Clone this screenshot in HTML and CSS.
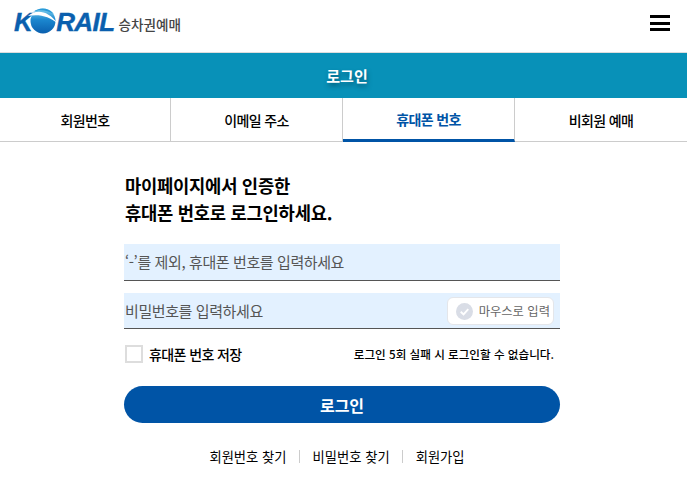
FILE: index.html
```html
<!doctype html>
<html lang="ko">
	<head>
		<meta charset="UTF-8" />
		<title>로그인</title>
		<link rel="stylesheet" href="styles.css">
	</head>
	<body>
		<header class="topbar">
			<a class="logo">
				<span class="logo-word">K<svg class="logo-globe" width="30" height="27" viewBox="0 0 30 27">
					<defs>
						<linearGradient id="globe" x1="0" y1="0" x2="0" y2="1">
							<stop offset="0" stop-color="#7fd0ee" />
							<stop offset="0.45" stop-color="#1b87cf" />
							<stop offset="1" stop-color="#0a5fae" />
						</linearGradient>
					</defs>
					<circle cx="15" cy="14" r="12.5" fill="url(#globe)" />
					<path d="M0 9C8 2 20 3 30 17C21 9 11 7 0 9Z" fill="#fff" />
					<path d="M5 5C11 0 20 0 26 7C19 3 11 2 5 5Z" fill="#2a9ad8" />
				</svg>RAIL</span>
				<span class="logo-sub">승차권예매</span>
			</a>
			<button class="menu" aria-label="메뉴"><i></i><i></i><i></i></button>
		</header>

		<h1 class="title-band"><span>로그인</span></h1>

		<nav class="tabs">
			<a class="tab">회원번호</a>
			<a class="tab">이메일 주소</a>
			<a class="tab active">휴대폰 번호</a>
			<a class="tab">비회원 예매</a>
		</nav>

		<main class="login">
			<p class="lead">마이페이지에서 인증한<br />휴대폰 번호로 로그인하세요.</p>

			<div class="field mb-12">
				<input class="input" type="text" placeholder="‘-’를 제외, 휴대폰 번호를 입력하세요" />
			</div>
			<div class="field field-short">
				<input class="input" type="text" placeholder="비밀번호를 입력하세요" />
				<span class="mouse-btn">
					<svg width="17" height="17" viewBox="0 0 18 18">
						<circle cx="9" cy="9" r="9" fill="#d9dde6" />
						<path d="M5 9.2L8 12L13 6.5" fill="none" stroke="#fff" stroke-width="2" />
					</svg>
					마우스로 입력
				</span>
			</div>

			<div class="options">
				<label class="save"><span class="check"></span>휴대폰 번호 저장</label>
				<span class="notice">로그인 5회 실패 시 로그인할 수 없습니다.</span>
			</div>

			<button class="submit">로그인</button>

			<div class="links">
				<a>회원번호 찾기</a>
				<a>비밀번호 찾기</a>
				<a>회원가입</a>
			</div>
		</main>
	</body>
</html>
```

FILE: styles.css
```css
:root {
	--color-blue: #0054a6;
	--color-teal: #0891b8;
	--color-field: #e3f1ff;
	--color-line: #cccccc;
}

* {
	box-sizing: border-box;
}

body {
	margin: 0;
	background-color: #fff;
	color: #000;
	font-family: 'Noto Sans CJK KR', 'Noto Sans', sans-serif;
	overflow: hidden;
}

a {
	color: inherit;
	text-decoration: none;
}

.topbar {
	display: flex;
	align-items: flex-start;
	justify-content: space-between;
	height: 52px;
	padding: 9px 17px 0 14px;
}

.logo {
	display: flex;
	align-items: center;
	gap: 4px;
}

.logo-word {
	display: flex;
	align-items: center;
	color: #0a5fae;
	font-family: 'Liberation Sans', sans-serif;
	font-size: 26px;
	font-weight: 700;
	font-style: italic;
	line-height: 27px;
	letter-spacing: -0.6px;
	-webkit-text-stroke: 0.4px #0a5fae;
}

.logo-globe {
	margin: -4px -2px 0 -4px;
}

.logo-sub {
	color: #444;
	font-size: 13.6px;
	font-weight: 500;
	line-height: 18px;
	margin-top: 3px;
}

.menu {
	display: flex;
	flex-direction: column;
	gap: 3.5px;
	width: 20px;
	margin-top: 6px;
	padding: 0;
	border: none;
	background: none;
}

.menu i {
	display: block;
	height: 3px;
	background-color: #000;
}

.title-band {
	display: flex;
	align-items: center;
	justify-content: center;
	height: 46px;
	margin: 0;
	padding-left: 7px;
	border-top: 1px solid #ddd;
	background-color: var(--color-teal);
	color: #fff;
	font-size: 15px;
	font-weight: 700;
	text-shadow: 1px 3px 4px rgba(0, 40, 60, 0.5);
}

.tabs {
	display: grid;
	grid-template-columns: 171px 172px 172px 172px;
	height: 44px;
	border-bottom: 1px solid var(--color-line);
}

.tab {
	display: flex;
	align-items: center;
	justify-content: center;
	border-right: 1px solid var(--color-line);
	font-size: 14px;
	font-weight: 500;
	letter-spacing: -0.6px;
}

.tab:last-child {
	border-right: none;
}

.tab.active {
	margin-bottom: -1px;
	border-bottom: 3px solid var(--color-blue);
	color: var(--color-blue);
	font-weight: 700;
}

.login {
	width: 436px;
	margin-left: 124px;
	padding-top: 30px;
}

.lead {
	margin: 0 0 18px 1px;
	font-size: 17.7px;
	font-weight: 700;
	line-height: 27px;
	letter-spacing: -0.25px;
}

.field {
	position: relative;
	height: 37px;
	background-color: var(--color-field);
	border-bottom: 1px solid #555;
}

.field-short {
	height: 36px;
}

.mb-12 {
	margin-bottom: 12px;
}

.input {
	width: 100%;
	height: 35px;
	padding: 0 1px;
	border: none;
	outline: none;
	background: none;
	font-family: inherit;
	font-size: 15px;
	letter-spacing: -0.4px;
}

.input::placeholder {
	color: #555;
	opacity: 1;
}

.mouse-btn {
	position: absolute;
	top: 4px;
	right: 6px;
	display: flex;
	align-items: center;
	gap: 6px;
	height: 28px;
	padding: 0 3px 0 8px;
	border: 1px solid #e4e6ea;
	border-radius: 6px;
	background-color: #fff;
	color: #666;
	font-size: 12.3px;
}

.options {
	display: flex;
	align-items: center;
	justify-content: space-between;
	height: 18px;
	margin-top: 16px;
	padding-right: 6px;
}

.save {
	display: flex;
	align-items: center;
	gap: 6px;
	font-size: 14px;
	font-weight: 500;
	letter-spacing: -0.6px;
}

.check {
	width: 18px;
	height: 18px;
	border: 2px solid #ddd;
	background-color: #fff;
	margin-left: 1px;
}

.notice {
	font-size: 11.6px;
	font-weight: 500;
}

.submit {
	display: block;
	width: 100%;
	height: 37px;
	margin-top: 23px;
	border: none;
	border-radius: 19px;
	background-color: var(--color-blue);
	color: #fff;
	font-family: inherit;
	font-size: 16px;
	font-weight: 700;
}

.links {
	display: flex;
	justify-content: center;
	align-items: center;
	margin-top: 24px;
	margin-right: 12px;
	font-size: 13.3px;
	line-height: 19px;
}

.links a {
	padding: 0 12px 0 14px;
	position: relative;
}

.links a + a::before {
	content: '';
	position: absolute;
	left: 0;
	top: 3px;
	height: 13px;
	width: 1px;
	background-color: var(--color-line);
}
```
